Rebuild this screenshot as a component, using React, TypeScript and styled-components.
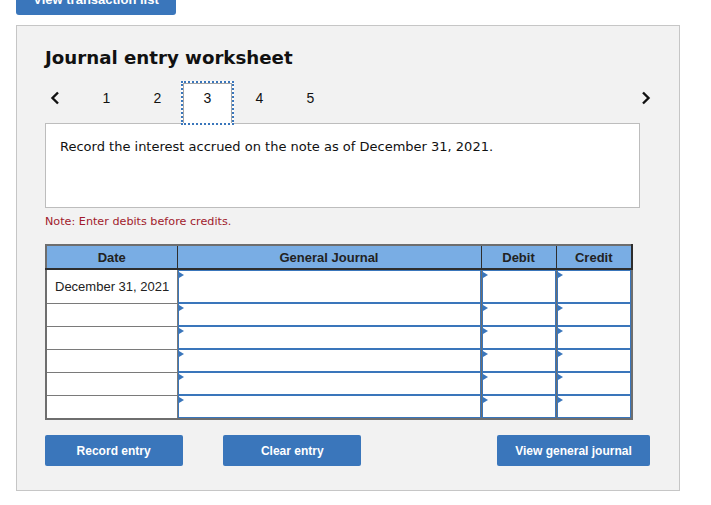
import React from "react";
import styled, { createGlobalStyle } from "styled-components";

const Global = createGlobalStyle`
  html, body { margin: 0; padding: 0; background: #ffffff; }
  body { font-family: "DejaVu Sans", Verdana, sans-serif; overflow: hidden; }
`;

const Page = styled.div`
  padding-left: 16px;
  width: 664px;
`;

const TopButton = styled.button`
  display: block;
  margin-top: -17px;
  width: 160px;
  height: 32px;
  border: none;
  border-radius: 3px;
  background: #3a76bb;
  color: #ffffff;
  font-family: "Liberation Sans", Arial, sans-serif;
  font-weight: bold;
  font-size: 13px;
  padding: 0;
`;

const Panel = styled.section`
  margin-top: 10px;
  box-sizing: border-box;
  width: 664px;
  height: 466px;
  background: #f2f2f2;
  border: 1px solid #c6c6c6;
  padding: 20px 28px 0 28px;
`;

const Title = styled.h2`
  margin: 0;
  font-family: "DejaVu Sans", Verdana, sans-serif;
  font-weight: bold;
  font-size: 18.2px;
  line-height: 24px;
  color: #111111;
`;

const Pager = styled.div`
  margin-top: 11px;
  display: flex;
  align-items: stretch;
  height: 44px;
  position: relative;
  z-index: 2;
`;

const Arrow = styled.span<{ $end?: boolean }>`
  display: flex;
  align-items: flex-start;
  justify-content: ${(p) => (p.$end ? "flex-end" : "flex-start")};
  box-sizing: border-box;
  padding-top: 10px;
  padding-left: ${(p) => (p.$end ? 0 : 5)}px;
  width: 26px;
  color: #111111;
`;

const Tabs = styled.div`
  display: flex;
  margin-left: 10px;
  flex: 1;
`;

const Tab = styled.div<{ $active?: boolean }>`
  box-sizing: border-box;
  width: 51px;
  display: flex;
  align-items: flex-start;
  justify-content: center;
  padding-top: 9px;
  font-family: "Liberation Sans", Arial, sans-serif;
  font-size: 14px;
  line-height: 16px;
  color: #111111;
  ${(p) =>
    p.$active
      ? `
    width: 53px;
    margin-left: -2px;
    padding-top: 6px;
    background: #ffffff;
    outline: 2px dotted #3a76bb;
    outline-offset: -2px;
    border: 3px solid transparent;
    position: relative;
    &::before {
      content: "";
      position: absolute;
      left: -1px; right: -1px; top: -1px; bottom: -1px;
      border: 1px solid #a8a8a8;
      border-bottom: none;
    }
  `
      : ""}
`;

const Prompt = styled.div`
  margin-top: -2px;
  box-sizing: border-box;
  width: 595px;
  height: 85px;
  background: #ffffff;
  border: 1px solid #bdbdbd;
  padding: 14px 14px;
  font-family: "DejaVu Sans", Verdana, sans-serif;
  font-size: 13px;
  line-height: 17px;
  color: #111111;
  position: relative;
  z-index: 1;
`;

const Note = styled.p`
  margin: 7px 0 0 0;
  font-family: "DejaVu Sans", Verdana, sans-serif;
  font-size: 11.2px;
  line-height: 14px;
  color: #a11a2c;
`;

const Table = styled.table`
  margin-top: 15px;
  border-collapse: collapse;
  table-layout: fixed;
  width: 586px;
  border-bottom: 2px solid #6e6e6e;
`;

const Head = styled.th`
  height: 24px;
  box-sizing: border-box;
  padding: 0;
  background: #79ade4;
  border: 1px solid #2e2e2e;
  border-top: 2px solid #6e6e6e;
  border-bottom: 2px solid #2e2e2e;
  font-family: "Liberation Sans", Arial, sans-serif;
  font-weight: bold;
  font-size: 13px;
  color: #222222;
  &:first-child { border-left: 2px solid #6e6e6e; }
  &:last-child { border-right: 2px solid #2e2e2e; }
`;

const DateCell = styled.td<{ $tall?: boolean }>`
  height: ${(p) => (p.$tall ? 33 : 23)}px;
  box-sizing: border-box;
  padding: 0 0 0 8px;
  background: #ffffff;
  border: 1px solid #7a7a7a;
  border-left: 2px solid #6e6e6e;
  font-family: "Liberation Sans", Arial, sans-serif;
  font-size: 13px;
  color: #222222;
`;

const InputCell = styled.td<{ $last?: boolean }>`
  padding: 0;
  border-left: 1px solid #6e6e6e;
  border-right: ${(p) => (p.$last ? "2px" : "1px")} solid #6e6e6e;
  background: #ffffff;
`;

const Field = styled.div<{ $tall?: boolean }>`
  box-sizing: border-box;
  height: ${(p) => (p.$tall ? 33 : 23)}px;
  border: 1px solid #3a76bb;
  border-width: 1px 1.5px;
  position: relative;
  background: #ffffff;
  &::before {
    content: "";
    position: absolute;
    left: 0;
    top: 1px;
    border-left: 5px solid #3a76bb;
    border-top: 3px solid transparent;
    border-bottom: 3px solid transparent;
  }
`;

const Actions = styled.div`
  margin-top: 15px;
  display: flex;
  width: 605px;
  gap: 40px;
`;

const ActionButton = styled.button<{ $push?: boolean }>`
  height: 31px;
  width: ${(p) => (p.$push ? 153 : 138)}px;
  margin-left: ${(p) => (p.$push ? "auto" : "0")};
  border: none;
  border-radius: 2px;
  background: #3a76bb;
  color: #ffffff;
  padding: 0;
  display: flex;
  align-items: center;
  justify-content: center;
`;

const ButtonLabel = styled.span`
  display: inline-block;
  font-family: "Liberation Sans", Arial, sans-serif;
  font-weight: bold;
  font-size: 13.5px;
  white-space: nowrap;
  transform: scaleX(0.89);
`;

const Chevron = ({ dir }: { dir: "left" | "right" }) => (
  <svg width="10" height="14" viewBox="0 0 10 14">
    <path
      d={dir === "left" ? "M8 1.5 L2.5 7 L8 12.5" : "M2 1.5 L7.5 7 L2 12.5"}
      fill="none"
      stroke="#111"
      strokeWidth="2.4"
    />
  </svg>
);

const rows = [
  { date: "December 31, 2021", tall: true },
  { date: "", tall: false },
  { date: "", tall: false },
  { date: "", tall: false },
  { date: "", tall: false },
  { date: "", tall: false },
];

export default function App() {
  return (
    <>
      <Global />
      <Page>
        <TopButton>View transaction list</TopButton>
        <Panel>
          <Title>Journal entry worksheet</Title>
          <Pager>
            <Arrow>
              <Chevron dir="left" />
            </Arrow>
            <Tabs>
              <Tab>1</Tab>
              <Tab>2</Tab>
              <Tab $active>3</Tab>
              <Tab>4</Tab>
              <Tab>5</Tab>
            </Tabs>
            <Arrow $end>
              <Chevron dir="right" />
            </Arrow>
          </Pager>
          <Prompt>Record the interest accrued on the note as of December 31, 2021.</Prompt>
          <Note>Note: Enter debits before credits.</Note>
          <Table>
            <colgroup>
              <col style={{ width: 131 }} />
              <col style={{ width: 304 }} />
              <col style={{ width: 75 }} />
              <col style={{ width: 76 }} />
            </colgroup>
            <thead>
              <tr>
                <Head>Date</Head>
                <Head>General Journal</Head>
                <Head>Debit</Head>
                <Head>Credit</Head>
              </tr>
            </thead>
            <tbody>
              {rows.map((r, i) => (
                <tr key={i}>
                  <DateCell $tall={r.tall}>{r.date}</DateCell>
                  <InputCell>
                    <Field $tall={r.tall} />
                  </InputCell>
                  <InputCell>
                    <Field $tall={r.tall} />
                  </InputCell>
                  <InputCell $last>
                    <Field $tall={r.tall} />
                  </InputCell>
                </tr>
              ))}
            </tbody>
          </Table>
          <Actions>
            <ActionButton>
              <ButtonLabel>Record entry</ButtonLabel>
            </ActionButton>
            <ActionButton>
              <ButtonLabel>Clear entry</ButtonLabel>
            </ActionButton>
            <ActionButton $push>
              <ButtonLabel>View general journal</ButtonLabel>
            </ActionButton>
          </Actions>
        </Panel>
      </Page>
    </>
  );
}
